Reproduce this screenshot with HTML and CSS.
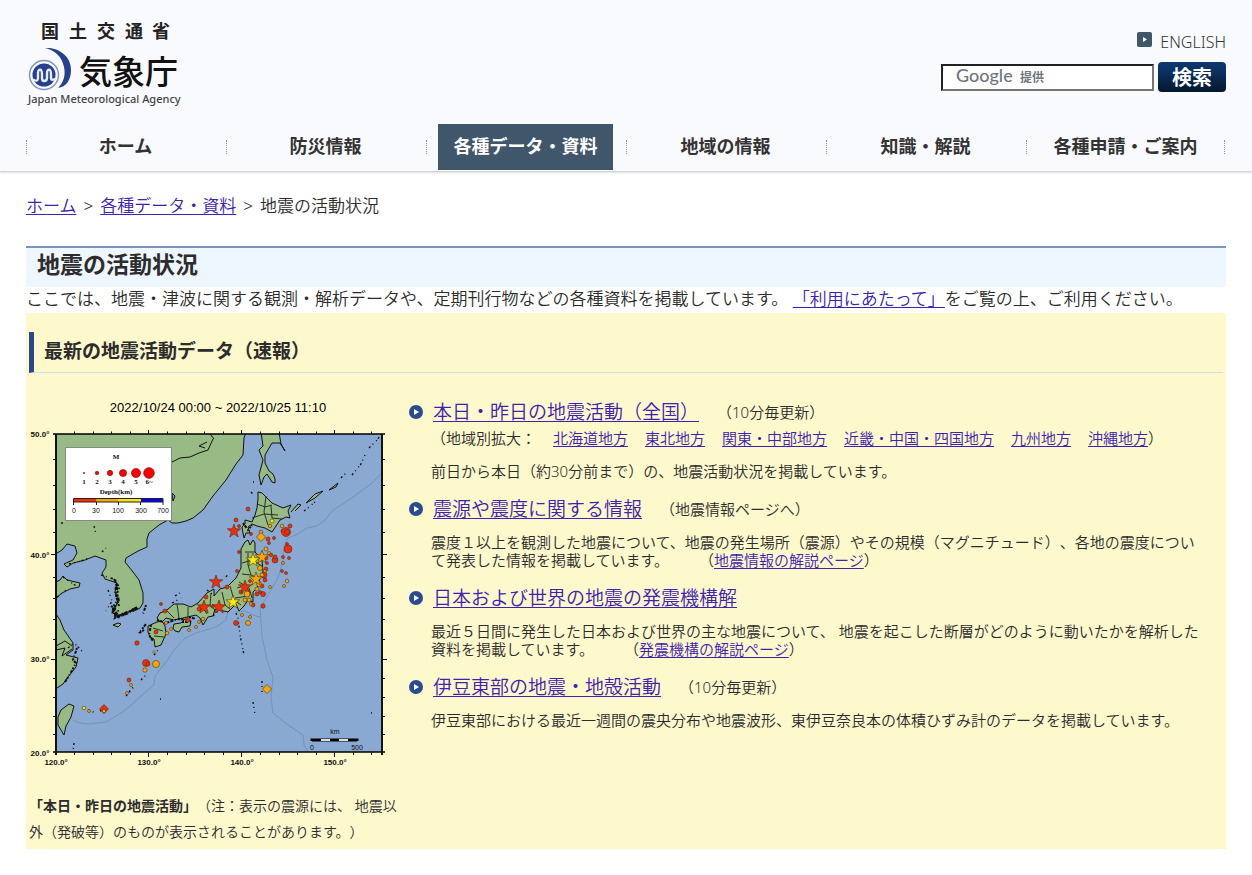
FILE: index.html
```html
<!DOCTYPE html>
<html lang="ja">
<head>
<meta charset="utf-8">
<title>気象庁 | 地震の活動状況</title>
<link rel="stylesheet" href="styles.css">
</head>
<body>
<header class="site-header">
  <div class="header-top">
    <a class="logo" href="#" aria-label="国土交通省 気象庁">
      <svg width="156" height="90" viewBox="26 18 156 90">
        <text class="logo-ministry" y="38" x="41 69 97 125 152">国土交通省</text>
        <path fill="#24408e" d="M45 48C56 47 71 54 71 70C71 80 66 87 58 88C63 83 66 76 64 67C62 57 55 50 45 48Z"/>
        <circle cx="44" cy="75" r="14.500" fill="#f9fafd" stroke="#8296c4" stroke-width="1.500"/>
        <circle cx="44" cy="75" r="11.500" fill="#24408e"/>
        <path fill="none" stroke="#e8ecf6" stroke-width="2.400" stroke-linecap="round" d="M34 80Q38 82 38 78V73Q38 69 41 70Q42 71 42 74V78Q42 81 44 81Q47 81 47 78V73Q47 69 50 70Q51 71 51 74V78Q51 81 55 79"/>
        <text class="logo-name" x="79" y="84">気象庁</text>
        <text class="logo-english" x="28" y="103">Japan Meteorological Agency</text>
      </svg>
    </a>
    <div class="tools">
      <a class="english" href="#">
        <svg width="15" height="15" viewBox="0 0 15 15"><rect width="15" height="15" rx="2" fill="#40566b"/><path d="M6 5L10 7.500L6 10Z" fill="#fff"/></svg>
        ENGLISH</a>
      <form class="search">
        <label class="search-field"><input type="search" aria-label="サイト内検索"><span class="search-brand"><span class="google">Google</span> <span class="by">提供</span></span></label>
        <button type="button">検索</button>
      </form>
    </div>
  </div>
  <nav class="nav">
    <a href="#">ホーム</a>
    <a href="#">防災情報</a>
    <a class="active" href="#">各種データ・資料</a>
    <a href="#">地域の情報</a>
    <a href="#">知識・解説</a>
    <a href="#">各種申請・ご案内</a>
  </nav>
</header>
<main class="main">
  <div class="breadcrumb"><a href="#">ホーム</a><span>&gt;</span><a href="#">各種データ・資料</a><span>&gt;</span>地震の活動状況</div>
  <h1>地震の活動状況</h1>
  <p class="intro">ここでは、地震・津波に関する観測・解析データや、定期刊行物などの各種資料を掲載しています。 <a href="#">「利用にあたって」</a>をご覧の上、ご利用ください。</p>
  <section class="latest">
    <h2>最新の地震活動データ（速報）</h2>
    <div class="columns">
      <div class="map-column">
        <svg class="map" width="360" height="380" viewBox="29 395 360 380" role="img" aria-label="震央分布図">
          <defs>
            <clipPath id="sea"><rect x="56" y="434" width="326" height="318"/></clipPath>
            <path id="star" d="M0-7L1.700-2.200L6.700-2.200L2.700 1L4.200 6L0 3L-4.200 6L-2.700 1L-6.700-2.200L-1.700-2.200Z"/>
            <path id="diamond" d="M0-4.500L4.500 0L0 4.500L-4.500 0Z"/>
          </defs>
          <text class="map-title" x="218" y="412">2022/10/24 00:00 ~ 2022/10/25 11:10</text>
          <rect x="56" y="434" width="326" height="318" fill="#89a9d3"/>
          <g clip-path="url(#sea)">
            <g class="trench">
              <path d="M382 473L372 483L360 492L346 502L333 510L325 520L317 526L307 528L298 534L288 538L284 546L283 560L278 578L268 595L260 608L262 637L267 660L273 677L271 697L273 713L288 725L303 735L304 745L308 752"/>
              <path d="M73 720L80 723L89 724L106 722L118 715L129 707L142 695L154 685L155 676L169 658L174 650L185 638L196 633L216 627L226 620L228 611"/>
              <path d="M235 612L245 611L253 615L260 617"/>
            </g>
            <g class="land">
              <path d="M54 432H246L244 438L243 455L236 464L226 480L213 496L203 510L193 518L186 521L178 523L172 523L168 520L159 525L149 533L147 539L147 547L138 551L126 558L125 562L133 572L139 580L143 593L143 603L140 608L136 610L128 612L116 616L112 612L116 606L118 600L115 592L117 583L105 579L102 573L106 567L106 560L95 556L85 560L73 563L67 567L64 564L73 560L77 553L75 546L67 544L62 550L54 555Z"/>
              <path d="M54 583L60 580L63 576L67 580L80 583L79 587L70 589L62 593L54 600Z"/>
              <path d="M54 611L60 620L64 630L73 643L73 650L66 655L78 658L76 667L68 677L63 684L54 690Z"/>
              <path d="M69 704L74 706L71 717L66 726L64 735L58 725L58 717L61 710Z"/>
              <path d="M261 432L263 446L259 450L263 460L259 475L261 485L264 477L267 474L272 482L275 483L275 479L273 474L269 471L265 463L265 455L272 443L280 443L285 451L281 444L279 432Z"/>
              <path d="M258 492L262 493L272 503L283 508L291 505L288 511L290 518L286 517L280 520L272 532L265 528L257 526L252 524L248 527L250 533L246 533L244 538L243 533L242 527L245 524L245 520L252 522L255 515L257 508L258 499Z"/>
              <path d="M245 542L248 540L250 545L253 540L255 543L255 552L262 560L263 572L259 581L257 588L253 592L253 602L248 600L244 606L239 611L236 604L228 612L215 609L213 616L208 617L203 625L200 618L196 615L183 618L174 620L166 618L161 623L157 618L160 613L167 610L174 604L183 604L191 607L198 603L207 593L214 589L214 596L220 589L227 587L236 578L241 568L241 549Z"/>
              <path d="M174 624L181 623L185 619L191 621L190 626L182 627L179 632L175 631L173 628Z"/>
              <path d="M148 626L157 622L162 621L165 626L166 634L161 645L155 647L154 639L150 637L148 632Z"/>
              <path d="M113 625L118 623L121 624L118 627Z"/>
              <path d="M291 512L298 504L301 505L295 511M306 503L315 494L323 491L315 498ZM329 490L338 483L336 487Z"/>
              <path d="M56 646L65 641L72 646M56 650L65 648L62 656L72 649"/>
              <path fill="none" d="M172 462L180 458L190 457L199 453L208 450L213 439M205 448L199 446L207 442M210 434L214 439"/>
              <path d="M172 493L175 496L173 501Z" fill="#89a9d3"/>
            </g>
            <g class="prefecture">
              <path d="M257 504L265 507L272 505M266 496L264 512L268 525M271 506L272 518L282 519M252 518L264 514L278 515M245 552H255M242 563L252 560L262 566M248 553V565L251 575L242 574M251 575L260 579M239 582L249 588L252 598M230 586L234 600L241 605M222 592L225 605L230 609M211 593L210 606L218 612M201 605L207 614M188 607V617M177 604L179 618M167 611L174 618M153 628L163 631M154 636L164 637M237 588L247 585M235 598L249 596"/>
            </g>
            <g class="islets">
              <path d="M117 584L116 592L118 600L114 607L113 614L120 617M113 610L117 615M122 615L131 611L139 607" stroke-width="3.500"/>
              <path d="M115 581L119 588L116 596L119 606M111 606L118 611L115 618L127 613L136 608M111 578L118 582M77 648L73 660L76 663L70 674L65 682M146 605L143 614M151 625L149 635L153 641M144 630L139 633L146 624M157 620L166 623L178 619L189 620M189 617L196 619M182 622L193 622M243 523L248 530L252 525" />
              <path class="sparse" d="M101 575L111 578M108 590L112 601L106 611M69 564L81 561L89 558M63 577L78 587M57 597L66 590M68 648L74 643L82 651M175 596L180 593M102 552L106 548M94 526L96 534M61 523H63M154 655L158 650M141 680L147 674M126 696L133 688M129 692L134 686M88 710L96 713M100 711L107 708M74 743L73 751"/>
              <path class="sparse" d="M236 613L238 618L240 635L244 655M262 681V693M253 702L255 714M371 713H372M160 699H161M352 475L361 464L365 455M369 448L378 439L381 433M341 478L347 472M304 511L315 502M251 492L254 495M253 482H254M226 577L229 573M207 590L212 594M172 603L181 598M213 616L218 611"/>
            </g>
            <g class="quake red">
              <circle cx="248" cy="509" r="2"/><circle cx="236" cy="520" r="2"/><circle cx="239" cy="526" r="1.500"/><circle cx="251" cy="534" r="1.500"/><circle cx="290" cy="526" r="2"/><circle cx="283" cy="531" r="2"/><circle cx="286" cy="532" r="4.500"/><circle cx="287" cy="532" r="2.500"/><circle cx="288" cy="549" r="4"/><circle cx="287" cy="544" r="1.500"/><circle cx="268" cy="539" r="2"/><circle cx="269" cy="543" r="1.500"/><circle cx="274" cy="538" r="1.500"/><circle cx="239" cy="552" r="1.500"/><circle cx="266" cy="558" r="2"/><circle cx="271" cy="555" r="1.800"/><circle cx="275" cy="560" r="3"/><circle cx="275" cy="557" r="2"/><circle cx="283" cy="557" r="1.500"/><circle cx="289" cy="558" r="1.500"/><circle cx="282" cy="571" r="1.500"/><circle cx="286" cy="573" r="1.500"/><circle cx="264" cy="575" r="3"/><circle cx="265" cy="580" r="2"/><circle cx="262" cy="586" r="2"/><circle cx="263" cy="594" r="2.500"/><circle cx="263" cy="606" r="2.200"/><circle cx="253" cy="605" r="2"/><circle cx="257" cy="594" r="2"/><circle cx="250" cy="581" r="1.500"/><circle cx="236" cy="623" r="2.500"/><circle cx="188" cy="620" r="2.200"/><circle cx="165" cy="611" r="2"/><circle cx="161" cy="604" r="1.500"/><circle cx="156" cy="632" r="2"/><circle cx="137" cy="643" r="2.200"/><circle cx="129" cy="680" r="2"/><circle cx="206" cy="597" r="2"/><circle cx="227" cy="587" r="2"/><circle cx="213" cy="606" r="1.500"/><circle cx="199" cy="609" r="2"/><circle cx="237" cy="571" r="1.500"/><circle cx="146" cy="663" r="3.500"/><circle cx="148" cy="664" r="2"/><circle cx="267" cy="563" r="1.500"/><circle cx="266" cy="569" r="2"/><circle cx="260" cy="592" r="1.500"/><circle cx="241" cy="592" r="2"/><circle cx="248" cy="592" r="2"/>
              <use href="#star" x="234" y="531"/><use href="#star" x="216" y="582"/><use href="#star" x="245" y="587"/><use href="#star" x="204" y="607"/><use href="#star" x="219" y="607"/>
              <use href="#diamond" x="104" y="709"/>
            </g>
            <g class="quake orange">
              <circle cx="261" cy="532" r="1.800"/><circle cx="270" cy="526" r="1.700"/><circle cx="282" cy="526" r="1.800"/><circle cx="266" cy="549" r="2"/><circle cx="269" cy="553" r="1.500"/><circle cx="260" cy="568" r="2.500"/><circle cx="262" cy="575" r="2"/><circle cx="265" cy="571" r="1.500"/><circle cx="259" cy="584" r="2.500"/><circle cx="257" cy="589" r="2"/><circle cx="247" cy="594" r="3"/><circle cx="249" cy="600" r="2"/><circle cx="251" cy="604" r="1.500"/><circle cx="245" cy="600" r="2"/><circle cx="242" cy="615" r="1.500"/><circle cx="250" cy="617" r="1.500"/><circle cx="248" cy="623" r="2.500"/><circle cx="283" cy="563" r="1.500"/><circle cx="287" cy="581" r="1.800"/><circle cx="284" cy="586" r="1.500"/><circle cx="270" cy="587" r="1.500"/><circle cx="203" cy="619" r="1.700"/><circle cx="199" cy="622" r="1.500"/><circle cx="189" cy="630" r="1.500"/><circle cx="167" cy="633" r="1.800"/><circle cx="171" cy="629" r="1.500"/><circle cx="166" cy="623" r="1.500"/><circle cx="156" cy="664" r="3.500"/><circle cx="145" cy="670" r="2.200"/><circle cx="131" cy="685" r="1.500"/><circle cx="127" cy="693" r="1.500"/><circle cx="104" cy="711" r="1.800"/><circle cx="89" cy="711" r="1.500"/><circle cx="196" cy="627" r="1.500"/>
              <use href="#star" x="262" y="557"/><use href="#star" x="256" y="579"/>
              <use href="#diamond" x="261" y="537"/><use href="#diamond" x="267" y="689"/>
            </g>
            <g class="quake yellow">
              <circle cx="272" cy="521" r="2"/><circle cx="84" cy="708" r="1.800"/><circle cx="154" cy="652" r="1.200"/>
              <use href="#star" x="253" y="560"/><use href="#star" x="233" y="602"/>
            </g>
          </g>
          <path fill="none" stroke="#000" stroke-width="1.500" d="M53 434H385M53 752H385"/>
          <path fill="none" stroke="#111" stroke-width="2" d="M56 434V755M382 434V755"/>
          <path class="ticks" d="M74.500 431.500V434M93.500 431.500V434M111.500 431.500V434M130.500 431.500V434M148.500 430V434M167.500 431.500V434M186.500 431.500V434M204.500 431.500V434M223.500 431.500V434M241.500 430V434M260.500 431.500V434M279.500 431.500V434M297.500 431.500V434M316.500 431.500V434M334.500 430V434M353.500 431.500V434M371.500 431.500V434M74.500 752V755M93.500 752V755M111.500 752V755M130.500 752V755M148.500 752V757M167.500 752V755M186.500 752V755M204.500 752V755M223.500 752V755M241.500 752V757M260.500 752V755M279.500 752V755M297.500 752V755M316.500 752V755M334.500 752V757M353.500 752V755M371.500 752V755M53 459.500H56M53 485.500H56M53 509.500H56M53 532.500H56M51 554.500H56M53 577.500H56M53 598.500H56M53 619.500H56M53 639.500H56M51 659.500H56M53 678.500H56M53 697.500H56M53 716.500H56M53 734.500H56M382 459.500H385M382 485.500H385M382 509.500H385M382 532.500H385M382 554.500H387M382 577.500H385M382 598.500H385M382 619.500H385M382 639.500H385M382 659.500H387M382 678.500H385M382 697.500H385M382 716.500H385M382 734.500H385"/>
          <g class="axis">
            <text x="40" y="437">50.0°</text><text x="40" y="558">40.0°</text><text x="40" y="662">30.0°</text><text x="40" y="756">20.0°</text>
            <text x="56" y="765">120.0°</text><text x="149" y="765">130.0°</text><text x="242" y="765">140.0°</text><text x="335" y="765">150.0°</text>
          </g>
          <g class="scale">
            <path d="M312 741V740H357V741" fill="none" stroke="#000" stroke-width="3"/>
            <path d="M321 740H330M339 740H348" stroke="#ddd" stroke-width="2"/>
            <text x="335" y="734">km</text><text x="312" y="750">0</text><text x="357" y="750">500</text>
          </g>
          <rect x="65.500" y="447.500" width="106" height="73" fill="#fff" stroke="#888"/>
          <g class="legend-serif">
            <text x="116" y="459">M</text><text x="84" y="484">1</text><text x="97" y="484">2</text><text x="110" y="484">3</text><text x="123" y="484">4</text><text x="136" y="484">5</text><text x="149" y="484">6~</text><text x="116" y="494">Depth(km)</text>
          </g>
          <g fill="#f00" stroke="#500" stroke-width=".5"><circle cx="84" cy="473" r=".7"/><circle cx="97" cy="473" r="1.800"/><circle cx="110" cy="473" r="2.700"/><circle cx="123" cy="473" r="3.600"/><circle cx="136" cy="473" r="4.600"/><circle cx="149" cy="473" r="5.400"/></g>
          <rect x="74" y="498" width="23" height="4" fill="#ff2a00"/><rect x="96" y="498" width="23" height="4" fill="#ffa500"/><rect x="118" y="498" width="23" height="4" fill="#ffe600"/><rect x="141" y="498" width="22" height="4" fill="#00f"/>
          <path d="M73.500 505V498.500H163V505M73.500 502H163M96.500 502V505M118.500 502V505M140.500 502V505" fill="none" stroke="#222"/>
          <g class="scale"><text x="74" y="513">0</text><text x="96" y="513">30</text><text x="118" y="513">100</text><text x="141" y="513">300</text><text x="163" y="513">700</text></g>
        </svg>
        <p class="caption"><strong>「本日・昨日の地震活動」</strong>（注：表示の震源には、 地震以外（発破等）のものが表示されることがあります。）</p>
      </div>
      <ul class="list">
        <li>
          <div class="head"><svg class="bullet" viewBox="0 0 14 14"><circle cx="7" cy="7" r="7" fill="#2b4a90"/><path d="M5 4L10 7L5 10Z" fill="#fff"/></svg><a href="#">本日・昨日の地震活動（全国）</a><span>（10分毎更新）</span></div>
          <div class="regions"><span>（地域別拡大：</span><a href="#">北海道地方</a><a href="#">東北地方</a><a href="#">関東・中部地方</a><a href="#">近畿・中国・四国地方</a><a href="#">九州地方</a><span><a href="#">沖縄地方</a>）</span></div>
          <p>前日から本日（約30分前まで）の、地震活動状況を掲載しています。</p>
        </li>
        <li>
          <div class="head"><svg class="bullet" viewBox="0 0 14 14"><circle cx="7" cy="7" r="7" fill="#2b4a90"/><path d="M5 4L10 7L5 10Z" fill="#fff"/></svg><a href="#">震源や震度に関する情報</a><span>（地震情報ページへ）</span></div>
          <p>震度１以上を観測した地震について、地震の発生場所（震源）やその規模（マグニチュード）、各地の震度につい<br>て発表した情報を掲載しています。　　（<a href="#">地震情報の解説ページ</a>）</p>
        </li>
        <li>
          <div class="head"><svg class="bullet" viewBox="0 0 14 14"><circle cx="7" cy="7" r="7" fill="#2b4a90"/><path d="M5 4L10 7L5 10Z" fill="#fff"/></svg><a href="#">日本および世界の地震の発震機構解</a></div>
          <p>最近５日間に発生した日本および世界の主な地震について、 地震を起こした断層がどのように動いたかを解析した<br>資料を掲載しています。　　（<a href="#">発震機構の解説ページ</a>）</p>
        </li>
        <li>
          <div class="head"><svg class="bullet" viewBox="0 0 14 14"><circle cx="7" cy="7" r="7" fill="#2b4a90"/><path d="M5 4L10 7L5 10Z" fill="#fff"/></svg><a href="#">伊豆東部の地震・地殻活動</a><span>（10分毎更新）</span></div>
          <p>伊豆東部における最近一週間の震央分布や地震波形、東伊豆奈良本の体積ひずみ計のデータを掲載しています。</p>
        </li>
      </ul>
    </div>
  </section>
</main>
</body>
</html>
```
FILE: styles.css
```css
* { box-sizing: border-box; }
body {
  margin: 0;
  background: #fff;
  color: #2c2c2c;
  font-family: "Noto Sans", "Noto Sans CJK JP", sans-serif;
  font-weight: 350;
  font-size: 17px;
  line-height: 26px;
  text-spacing-trim: space-all;
}
a { color: #3e22b0; text-underline-offset: 2px; }
p, h1, h2, ul { margin: 0; padding: 0; }

.site-header {
  background: #f9fafd;
  border-bottom: 1px solid #d4d4d6;
  box-shadow: 0 1px 2px #ddd;
  padding: 18px 26px 1px;
}
.header-top { display: flex; justify-content: space-between; height: 106px; }
.logo svg { display: block; }
.logo-ministry { font: bold 18px "Noto Sans CJK JP", sans-serif; fill: #222; }
.logo-name { font: 500 33px "Noto Sans CJK JP", sans-serif; fill: #111; }
.logo-english { font: 500 11px "Noto Sans", sans-serif; fill: #444; }
.tools { display: flex; flex-direction: column; align-items: flex-end; padding-top: 12px; }
.english { display: flex; gap: 8px; font-size: 16px; line-height: 24px; color: #333; text-decoration: none; height: 32px; }
.english svg { margin-top: 2px; }
.search { display: flex; align-items: center; gap: 4px; }
.search-field { position: relative; display: flex; }
.search input {
  width: 213px;
  height: 27px;
  border: 2px solid;
  border-color: #222 #767676 #767676 #222;
  background: #fff;
  margin: 0;
}
.search-brand { position: absolute; left: 15px; top: 0; line-height: 24px; color: #71767a; pointer-events: none; }
.google { font: 500 18px Lato, sans-serif; }
.by { font: bold 12px "Noto Sans CJK JP", sans-serif; margin-left: 3px; }
.search button {
  width: 68px;
  height: 30px;
  padding: 0;
  border: 0;
  border-radius: 4px;
  background: linear-gradient(#0d3a70, #0a2c58 45%, #031730);
  color: #fff;
  font: bold 20px/28px "Noto Sans CJK JP", sans-serif;
}

.nav { display: grid; grid-template-columns: repeat(6, 1fr); }
.nav a {
  position: relative;
  margin: 0 13px 0 12px;
  height: 46px;
  color: #333;
  font-size: 18px;
  font-weight: bold;
  line-height: 44px;
  text-align: center;
  text-decoration: none;
  white-space: nowrap;
}
.nav a::before, .nav a:last-child::after {
  content: "";
  position: absolute;
  top: 16px;
  left: -12px;
  height: 14px;
  border-left: 1px dotted #8195c4;
}
.nav a:last-child::after { left: auto; right: -12px; }
.nav .active { background: #40566b; color: #fff; }

.main { padding: 21px 26px 26px; }
.breadcrumb { display: flex; gap: 7px; padding-bottom: 27px; }
h1 {
  height: 41px;
  padding-left: 11px;
  border-top: 2px solid #7d94c0;
  background: #eef6ff;
  font-size: 23px;
  line-height: 32px;
}
.intro { line-height: 24px; padding-bottom: 2px; }
.latest { background: #fef8cd; padding: 19px 3px 4px; }
h2 {
  height: 41px;
  border-left: 5px solid #2b478b;
  border-bottom: 1px solid #d5dbea;
  padding-left: 10px;
  font-size: 19px;
  line-height: 38px;
}
.columns { display: flex; gap: 6px; padding-top: 22px; }
.map-column { flex: 0 0 374px; }
.map { display: block; }
.caption { font-size: 14px; padding-top: 18px; }
.map-title { font: 13px "Liberation Sans", sans-serif; text-anchor: middle; fill: #000; }
.trench { fill: none; stroke: #7593b5; stroke-width: 1; }
.land { fill: #98ba84; stroke: #111; stroke-width: 1; }
.prefecture { fill: none; stroke: #263322; stroke-width: 1; }
.islets { fill: none; stroke: #111; stroke-width: 2; stroke-dasharray: 2 1 3 2 1 2; }
.sparse { stroke-width: 1.4; stroke-dasharray: 2 3 1 4 1 2; }
.quake { stroke: #431; stroke-width: .6; }
.red { fill: #f82a0c; }
.orange { fill: #ffa500; }
.yellow { fill: #ffe900; }
.ticks { fill: none; stroke: #111; }
.axis { font: bold 8px "Liberation Sans", sans-serif; text-anchor: middle; fill: #111; }
.scale { font: 7px "Liberation Sans", sans-serif; text-anchor: middle; fill: #111; }
.legend-serif { font: bold 7px "Liberation Serif", serif; text-anchor: middle; fill: #111; }

.list { flex: 1; min-width: 0; padding-top: 4px; list-style: none; font-size: 15px; }
.list li { padding-bottom: 16px; }
.head { display: flex; align-items: center; height: 26px; }
.head a { font-size: 19px; margin-left: 10px; }
.head span { margin-left: 18px; }
.bullet { width: 14px; height: 14px; }
.regions { display: flex; gap: 17px; padding: 0 0 0 22px; }
.list p { padding-left: 22px; margin-top: 11px; line-height: 18px; }
```
